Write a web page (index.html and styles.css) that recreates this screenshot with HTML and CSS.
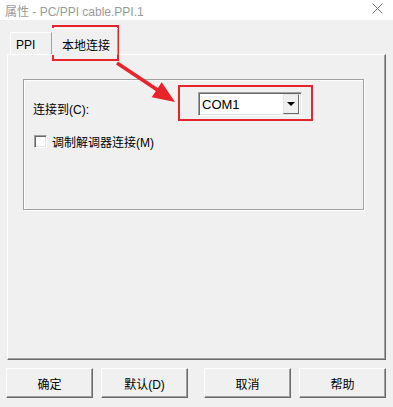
FILE: index.html
```html
<!DOCTYPE html>
<html lang="zh">
<head>
  <meta charset="UTF-8" />
  <title>属性 - PC/PPI cable.PPI.1</title>
  <link rel="stylesheet" href="styles.css">
</head>
<body>

<div class="titlebar">
  <span class="title">属性 - PC/PPI cable.PPI.1</span>
  <svg class="close" width="11" height="11" viewBox="0 0 11 11">
    <path d="M0.5 0.5 L10.5 10.5 M10.5 0.5 L0.5 10.5" stroke="#777" stroke-width="1" fill="none" />
  </svg>
</div>

<div class="dialog">
  <div class="tabs">
    <div class="tab">PPI</div>
    <div class="tab active">本地连接</div>
  </div>

  <div class="panel">
    <div class="group">
      <div class="row">
        <label class="field-label">连接到(C):</label>
        <div class="combo">
          <span class="combo-text">COM1</span>
          <span class="combo-btn"><i class="caret"></i></span>
        </div>
      </div>
      <div class="check-row">
        <span class="checkbox"></span>
        <span>调制解调器连接(M)</span>
      </div>
    </div>
  </div>

  <div class="buttons">
    <button class="btn">确定</button>
    <button class="btn">默认(D)</button>
    <button class="btn gap">取消</button>
    <button class="btn">帮助</button>
  </div>
</div>

<!-- red annotation overlay -->
<svg class="marks" width="393" height="407" viewBox="0 0 393 407">
  <rect x="53" y="26" width="65" height="34" fill="none" stroke="#e8232a" stroke-width="2" />
  <rect x="179" y="86" width="133" height="34" fill="none" stroke="#e8232a" stroke-width="2" />
  <line x1="117" y1="63" x2="159" y2="91" stroke="#e8232a" stroke-width="3.5" />
  <polygon points="175,102 151.7,97.2 161.7,82.2" fill="#e8232a" />
</svg>

</body>
</html>
```

FILE: styles.css
```css
body {
  margin: 0;
  width: 393px;
  height: 407px;
  overflow: hidden;
  background: #f0f0f0;
  font-family: "Liberation Sans", "Noto Sans CJK SC", sans-serif;
  font-size: 12px;
  color: #000;
  position: relative;
}
.titlebar {
  height: 20px;
  background: #fff;
  display: flex;
  align-items: center;
  justify-content: space-between;
  padding: 0 10px 0 5px;
}
.title {
  color: #9a9a9a;
}
.close {
  margin-top: -4px;
}
.dialog {
  padding: 0 7px;
}
.tabs {
  height: 34px;
  display: flex;
  align-items: flex-end;
  padding-left: 3px;
  position: relative;
  z-index: 1;
}
.tab {
  box-sizing: border-box;
  width: 42px;
  height: 22px;
  padding: 5px 0 0 5px;
  border: 1px solid;
  border-color: #fff #a0a0a0 transparent #fff;
  border-bottom: none;
}
.tab.active {
  width: 66px;
  height: 27px;
  margin-bottom: -1px;
  padding: 7px 0 0 10px;
  background: #f0f0f0;
  border-left: none;
}
.panel {
  box-sizing: border-box;
  height: 306px;
  border: 1px solid;
  border-color: #fff #696969 #696969 #fff;
  box-shadow: inset -1px -1px 0 #a0a0a0;
  padding: 24px 21px 0 15px;
}
.group {
  box-sizing: border-box;
  height: 131px;
  border: 1px solid #a0a0a0;
  box-shadow: inset 1px 1px 0 #fff, 1px 1px 0 #fff;
  padding: 12px 0 0 9px;
}
.row {
  display: flex;
  align-items: center;
  height: 24px;
}
.field-label {
  width: 165px;
  padding-top: 8px;
}
.combo {
  box-sizing: border-box;
  width: 104px;
  height: 24px;
  display: flex;
  align-items: center;
  background: #fff;
  border: 1px solid;
  border-color: #a0a0a0 #fff #fff #a0a0a0;
  box-shadow: inset 1px 1px 0 #696969, inset -1px -1px 0 #e3e3e3;
  padding: 0 2px 0 3px;
}
.combo-text {
  flex: 1;
  font-size: 13px;
}
.combo-btn {
  box-sizing: border-box;
  width: 16px;
  height: 20px;
  background: #f0f0f0;
  border: 1px solid;
  border-color: #e3e3e3 #696969 #696969 #e3e3e3;
  display: flex;
  align-items: center;
  justify-content: center;
}
.caret {
  width: 0;
  height: 0;
  border-left: 4px solid transparent;
  border-right: 4px solid transparent;
  border-top: 4px solid #000;
}
.check-row {
  display: flex;
  align-items: center;
  gap: 5px;
  margin: 19px 0 0 1px;
  height: 13px;
}
.checkbox {
  box-sizing: border-box;
  width: 13px;
  height: 13px;
  background: #fff;
  border: 1px solid;
  border-color: #a0a0a0 #fff #fff #a0a0a0;
  box-shadow: inset 1px 1px 0 #696969, inset -1px -1px 0 #e3e3e3;
}
.buttons {
  display: flex;
  gap: 8px;
  margin: 8px 0 0 -1px;
}
.btn {
  box-sizing: border-box;
  width: 87px;
  height: 30px;
  font: inherit;
  background: #f0f0f0;
  border: 1px solid;
  border-color: #fff #696969 #696969 #fff;
  box-shadow: inset -1px -1px 0 #a0a0a0;
  padding: 0;
}
.btn.gap {
  margin-left: 8px;
}
.marks {
  position: absolute;
  top: 0;
  left: 0;
  pointer-events: none;
}
```
